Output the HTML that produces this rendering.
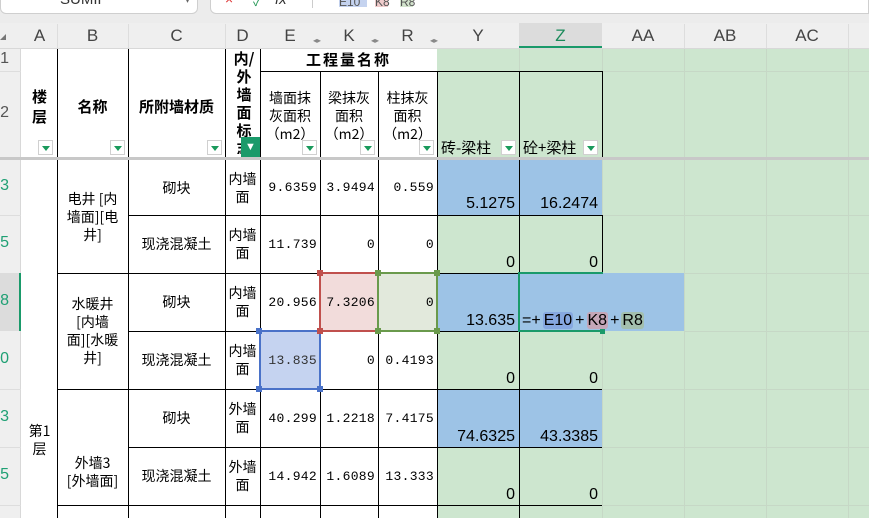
<!DOCTYPE html>
<html><head><meta charset="utf-8">
<style>
*{margin:0;padding:0;box-sizing:border-box}
html,body{width:869px;height:518px;overflow:hidden}
body{background:#fff;position:relative;font-family:"Liberation Sans","Noto Sans CJK SC",sans-serif}
.a{position:absolute}
.vl{position:absolute;width:1px;background:#000}
.hl{position:absolute;height:1px;background:#000}
.gv{position:absolute;width:1px;background:#c6d8c6}
.gh{position:absolute;height:1px;background:#c6d8c6}
.ch{position:absolute;top:23px;height:25px;line-height:25px;text-align:center;font-size:17px;color:#444}
.rn{position:absolute;left:-5px;width:14px;font-size:16px;color:#1fa074;text-align:right}
.t{position:absolute;display:flex;align-items:center;justify-content:center;text-align:center;font-family:"Noto Sans CJK SC",sans-serif;font-size:14px;line-height:18px;color:#000}
.n{position:absolute;display:flex;align-items:center;justify-content:flex-end;padding-right:3px;font-family:"Liberation Mono",monospace;font-size:13px;color:#000;letter-spacing:0.3px}
.z{position:absolute;text-align:right;padding-right:4px;font-size:16px;color:#000}
.dd{position:absolute;width:15px;height:15px;background:#fff;border:1px solid #d0d0d0}
.dd::after{content:"";position:absolute;left:3px;top:5px;border-left:4px solid transparent;border-right:4px solid transparent;border-top:5px solid #1a9a5c}
.hd{font-weight:bold}
.sq{position:absolute;width:6px;height:6px}
</style></head><body>
<div class="a" style="left:0;top:0;width:869px;height:23px;background:#ececec"></div>
<div class="a" style="left:0;top:-6px;width:198px;height:20px;background:#fff;border:1px solid #cfcfcf;border-radius:6px"></div>
<div class="a" style="left:60px;top:-9px;font-size:15px;color:#333">SUMIF</div>
<div class="a" style="left:185px;top:-5px;font-size:10px;color:#666">▾</div>
<div class="a" style="left:210px;top:-6px;width:659px;height:20px;background:#fff;border:1px solid #cfcfcf;border-radius:6px 0 0 6px"></div>
<div class="a" style="left:225px;top:-9px;font-size:14px;color:#d33">×</div>
<div class="a" style="left:253px;top:-9px;font-size:13px;color:#2a9a5a">✓</div>
<div class="a" style="left:275px;top:-9px;font-size:15px;color:#333;font-style:italic">fx</div>
<div class="a" style="left:312px;top:0;width:1px;height:8px;background:#ccc"></div>
<div class="a" style="left:339px;top:-5px;width:28px;height:12px;background:#c5d3ef;font-size:12px;color:#555">E10</div>
<div class="a" style="left:375px;top:-5px;width:13px;height:12px;background:#f0cccc;font-size:12px;color:#555">K8</div>
<div class="a" style="left:400px;top:-5px;width:13px;height:12px;background:#d2e3cc;font-size:12px;color:#555">R8</div>
<div class="a" style="left:0;top:23px;width:869px;height:26px;background:#efefef;border-bottom:1px solid #d8d8d8"></div>
<div class="a" style="left:519px;top:23px;width:83px;height:25px;background:#dcdcdc;border-bottom:2px solid #1a9a6a"></div>
<div class="a" style="left:0;top:34px;border-left:6px solid transparent;border-bottom:6px solid #777;"></div>
<div class="ch" style="left:22px;width:35px">A</div>
<div class="ch" style="left:57px;width:71px">B</div>
<div class="ch" style="left:128px;width:97px">C</div>
<div class="ch" style="left:225px;width:35px">D</div>
<div class="ch" style="left:260px;width:60px">E</div>
<div class="ch" style="left:320px;width:58px">K</div>
<div class="ch" style="left:378px;width:59px">R</div>
<div class="ch" style="left:437px;width:82px">Y</div>
<div class="ch" style="left:519px;width:83px;color:#1a8a5a">Z</div>
<div class="ch" style="left:602px;width:82px">AA</div>
<div class="ch" style="left:684px;width:82px">AB</div>
<div class="ch" style="left:766px;width:82px">AC</div>
<div class="a" style="left:313px;top:36px;font-size:8px;color:#888">◂▸</div>
<div class="a" style="left:371px;top:36px;font-size:8px;color:#888">◂▸</div>
<div class="a" style="left:430px;top:36px;font-size:8px;color:#888">◂▸</div>
<div class="a" style="left:57px;top:24px;width:1px;height:24px;background:#ddd"></div>
<div class="a" style="left:128px;top:24px;width:1px;height:24px;background:#ddd"></div>
<div class="a" style="left:225px;top:24px;width:1px;height:24px;background:#ddd"></div>
<div class="a" style="left:684px;top:24px;width:1px;height:24px;background:#ddd"></div>
<div class="a" style="left:766px;top:24px;width:1px;height:24px;background:#ddd"></div>
<div class="a" style="left:848px;top:24px;width:1px;height:24px;background:#ddd"></div>
<div class="a" style="left:0;top:49px;width:21px;height:469px;background:#efefef;border-right:1px solid #d8d8d8"></div>
<div class="a" style="left:0;top:273px;width:21px;height:58px;background:#dcdcdc;border-right:2px solid #1a9a6a"></div>
<div class="rn" style="top:50px;color:#555">1</div>
<div class="rn" style="top:104px;color:#555">2</div>
<div class="rn" style="top:177px">3</div>
<div class="rn" style="top:234px">5</div>
<div class="rn" style="top:292px">8</div>
<div class="rn" style="top:350px">0</div>
<div class="rn" style="top:408px">3</div>
<div class="rn" style="top:466px">5</div>
<div class="a" style="left:0;top:71px;width:21px;height:1px;background:#ddd"></div>
<div class="a" style="left:0;top:215px;width:21px;height:1px;background:#ddd"></div>
<div class="a" style="left:0;top:389px;width:21px;height:1px;background:#ddd"></div>
<div class="a" style="left:0;top:447px;width:21px;height:1px;background:#ddd"></div>
<div class="a" style="left:0;top:505px;width:21px;height:1px;background:#ddd"></div>
<div class="a" style="left:437px;top:49px;width:432px;height:469px;background:#cde6cf"></div>
<div class="gh" style="left:437px;top:71px;width:432px"></div>
<div class="gh" style="left:602px;top:215px;width:267px"></div>
<div class="gh" style="left:684px;top:273px;width:185px"></div>
<div class="gh" style="left:684px;top:331px;width:185px"></div>
<div class="gh" style="left:602px;top:389px;width:267px"></div>
<div class="gh" style="left:602px;top:447px;width:267px"></div>
<div class="gh" style="left:602px;top:505px;width:267px"></div>
<div class="gv" style="left:519px;top:49px;height:22px"></div>
<div class="gv" style="left:684px;top:49px;height:469px"></div>
<div class="gv" style="left:766px;top:49px;height:469px"></div>
<div class="gv" style="left:848px;top:49px;height:469px"></div>
<div class="gv" style="left:602px;top:49px;height:22px"></div>
<div class="gv" style="left:602px;top:160px;height:113px"></div>
<div class="gv" style="left:602px;top:331px;height:187px"></div>
<div class="a" style="left:437px;top:160px;width:165px;height:55px;background:#9dc3e6"></div>
<div class="a" style="left:437px;top:273px;width:247px;height:58px;background:#9dc3e6"></div>
<div class="a" style="left:437px;top:389px;width:165px;height:58px;background:#9dc3e6"></div>
<div class="a" style="left:260px;top:331px;width:60px;height:58px;background:#c5d3f0"></div>
<div class="a" style="left:320px;top:273px;width:58px;height:58px;background:#f2dcdb"></div>
<div class="a" style="left:378px;top:273px;width:59px;height:58px;background:#e2e9dc"></div>
<div class="a" style="left:0;top:157px;width:869px;height:3px;background:#c8c8c8"></div>
<div class="vl" style="left:57px;top:49px;height:108px"></div><div class="vl" style="left:57px;top:160px;height:358px"></div>
<div class="vl" style="left:128px;top:49px;height:108px"></div><div class="vl" style="left:128px;top:160px;height:358px"></div>
<div class="vl" style="left:225px;top:49px;height:108px"></div><div class="vl" style="left:225px;top:160px;height:358px"></div>
<div class="vl" style="left:260px;top:49px;height:108px"></div><div class="vl" style="left:260px;top:160px;height:358px"></div>
<div class="vl" style="left:320px;top:71px;height:86px"></div><div class="vl" style="left:320px;top:160px;height:358px"></div>
<div class="vl" style="left:378px;top:71px;height:86px"></div><div class="vl" style="left:378px;top:160px;height:358px"></div>
<div class="vl" style="left:437px;top:71px;height:86px"></div><div class="vl" style="left:437px;top:160px;height:358px"></div>
<div class="vl" style="left:519px;top:71px;height:86px"></div><div class="vl" style="left:519px;top:160px;height:358px"></div>
<div class="vl" style="left:602px;top:71px;height:86px"></div><div class="vl" style="left:602px;top:215px;height:58px"></div>
<div class="hl" style="left:260px;top:71px;width:342px"></div>
<div class="hl" style="left:57px;top:273px;width:545px"></div>
<div class="hl" style="left:57px;top:389px;width:545px"></div>
<div class="hl" style="left:57px;top:505px;width:545px"></div>
<div class="hl" style="left:128px;top:215px;width:474px"></div>
<div class="hl" style="left:128px;top:331px;width:474px"></div>
<div class="hl" style="left:128px;top:447px;width:474px"></div>
<div class="t hd" style="left:22px;top:72px;width:35px;height:70px;font-size:15px;line-height:20px">楼<br>层</div>
<div class="t hd" style="left:57px;top:72px;width:71px;height:70px;font-size:15px">名称</div>
<div class="t hd" style="left:128px;top:72px;width:97px;height:70px;font-size:15px">所附墙材质</div>
<div class="a hd" style="left:228px;top:50px;width:32px;height:104px;overflow:hidden;font-family:'Noto Sans CJK SC',sans-serif;font-size:15px;line-height:18px;text-align:center">内/<br>外<br>墙<br>面<br>标<br>志</div>
<div class="t hd" style="left:260px;top:49px;width:177px;height:22px;font-size:15px;letter-spacing:2px">工程量名称</div>
<div class="t" style="left:260px;top:86px;width:60px;height:60px;font-size:14px">墙面抹<br>灰面积<br>（m2）</div>
<div class="t" style="left:320px;top:86px;width:58px;height:60px;font-size:14px">梁抹灰<br>面积<br>（m2）</div>
<div class="t" style="left:378px;top:86px;width:59px;height:60px;font-size:14px">柱抹灰<br>面积<br>（m2）</div>
<div class="a" style="left:441px;top:137px;font-family:'Noto Sans CJK SC',sans-serif;font-size:15px">砖-梁柱</div>
<div class="a" style="left:523px;top:137px;font-family:'Noto Sans CJK SC',sans-serif;font-size:15px">砼+梁柱</div>
<div class="dd" style="left:38px;top:140px"></div>
<div class="dd" style="left:110px;top:140px"></div>
<div class="dd" style="left:207px;top:140px"></div>
<div class="a" style="left:241px;top:137px;width:19px;height:20px;background:#1a9a6a;color:#fff;font-size:11px;text-align:center;line-height:20px;font-weight:bold">▼</div>
<div class="dd" style="left:302px;top:140px"></div>
<div class="dd" style="left:360px;top:140px"></div>
<div class="dd" style="left:419px;top:140px"></div>
<div class="dd" style="left:501px;top:140px"></div>
<div class="dd" style="left:583px;top:140px"></div>
<div class="t" style="left:22px;top:390px;width:35px;height:100px;font-size:14px">第1<br>层</div>
<div class="t" style="left:57px;top:160px;width:71px;height:113px">电井 [内<br>墙面][电<br>井]</div>
<div class="t" style="left:57px;top:273px;width:71px;height:116px">水暖井<br>[内墙<br>面][水暖<br>井]</div>
<div class="t" style="left:57px;top:440px;width:71px;height:64px">外墙3<br>[外墙面]</div>
<div class="t" style="left:128px;top:160px;width:97px;height:55px">砌块</div>
<div class="t" style="left:128px;top:215px;width:97px;height:58px">现浇混凝土</div>
<div class="t" style="left:128px;top:273px;width:97px;height:58px">砌块</div>
<div class="t" style="left:128px;top:331px;width:97px;height:58px">现浇混凝土</div>
<div class="t" style="left:128px;top:389px;width:97px;height:58px">砌块</div>
<div class="t" style="left:128px;top:447px;width:97px;height:58px">现浇混凝土</div>
<div class="t" style="left:225px;top:160px;width:35px;height:55px">内墙<br>面</div>
<div class="t" style="left:225px;top:215px;width:35px;height:58px">内墙<br>面</div>
<div class="t" style="left:225px;top:273px;width:35px;height:58px">内墙<br>面</div>
<div class="t" style="left:225px;top:331px;width:35px;height:58px">内墙<br>面</div>
<div class="t" style="left:225px;top:389px;width:35px;height:58px">外墙<br>面</div>
<div class="t" style="left:225px;top:447px;width:35px;height:58px">外墙<br>面</div>
<div class="n" style="left:260px;top:160px;width:60px;height:55px">9.6359</div>
<div class="n" style="left:320px;top:160px;width:58px;height:55px">3.9494</div>
<div class="n" style="left:378px;top:160px;width:59px;height:55px">0.559</div>
<div class="n" style="left:260px;top:215px;width:60px;height:58px">11.739</div>
<div class="n" style="left:320px;top:215px;width:58px;height:58px">0</div>
<div class="n" style="left:378px;top:215px;width:59px;height:58px">0</div>
<div class="n" style="left:260px;top:273px;width:60px;height:58px">20.956</div>
<div class="n" style="left:320px;top:273px;width:58px;height:58px">7.3206</div>
<div class="n" style="left:378px;top:273px;width:59px;height:58px">0</div>
<div class="n" style="left:260px;top:331px;width:60px;height:58px;color:#333">13.835</div>
<div class="n" style="left:320px;top:331px;width:58px;height:58px">0</div>
<div class="n" style="left:378px;top:331px;width:59px;height:58px">0.4193</div>
<div class="n" style="left:260px;top:389px;width:60px;height:58px">40.299</div>
<div class="n" style="left:320px;top:389px;width:58px;height:58px">1.2218</div>
<div class="n" style="left:378px;top:389px;width:59px;height:58px">7.4175</div>
<div class="n" style="left:260px;top:447px;width:60px;height:58px">14.942</div>
<div class="n" style="left:320px;top:447px;width:58px;height:58px">1.6089</div>
<div class="n" style="left:378px;top:447px;width:59px;height:58px">13.333</div>
<div class="z" style="left:437px;top:195px;width:82px">5.1275</div>
<div class="z" style="left:519px;top:195px;width:83px">16.2474</div>
<div class="z" style="left:437px;top:254px;width:82px">0</div>
<div class="z" style="left:519px;top:254px;width:83px">0</div>
<div class="z" style="left:437px;top:312px;width:82px">13.635</div>
<div class="z" style="left:437px;top:370px;width:82px">0</div>
<div class="z" style="left:519px;top:370px;width:83px">0</div>
<div class="z" style="left:437px;top:428px;width:82px">74.6325</div>
<div class="z" style="left:519px;top:428px;width:83px">43.3385</div>
<div class="z" style="left:437px;top:486px;width:82px">0</div>
<div class="z" style="left:519px;top:486px;width:83px">0</div>
<div class="a" style="left:522px;top:312px;font-size:16px;white-space:nowrap;line-height:18px">=+<span style="background:#86a8e0;border-radius:3px;padding:0 1px;margin:0 2px">E10</span>+<span style="background:#c4a6b8;border-radius:3px;padding:0 1px;margin:0 2px">K8</span>+<span style="background:#a3bfae;border-radius:3px;padding:0 1px;margin:0 2px">R8</span></div>
<div class="a" style="left:259px;top:330px;width:62px;height:60px;border:2px solid #4a72c8"></div>
<div class="a" style="left:319px;top:272px;width:60px;height:60px;border:2px solid #c0504d"></div>
<div class="a" style="left:377px;top:272px;width:61px;height:60px;border:2px solid #6a9a4c"></div>
<div class="sq" style="left:256px;top:328px;background:#4a72c8"></div>
<div class="sq" style="left:256px;top:386px;background:#4a72c8"></div>
<div class="sq" style="left:317px;top:386px;background:#4a72c8"></div>
<div class="sq" style="left:317px;top:270px;background:#c0504d"></div>
<div class="sq" style="left:317px;top:328px;background:#c0504d"></div>
<div class="sq" style="left:375px;top:270px;background:#6a9a4c"></div>
<div class="sq" style="left:375px;top:328px;background:#6a9a4c"></div>
<div class="sq" style="left:434px;top:270px;background:#6a9a4c"></div>
<div class="sq" style="left:434px;top:328px;background:#6a9a4c"></div>
<div class="a" style="left:519px;top:272px;width:84px;height:2px;background:#1a9a6a"></div>
<div class="a" style="left:519px;top:330px;width:84px;height:2px;background:#1a9a6a"></div>
<div class="a" style="left:518px;top:272px;width:2px;height:60px;background:#1a9a6a"></div>
<div class="a" style="left:600px;top:329px;width:5px;height:5px;background:#1a9a6a"></div>
</body></html>
